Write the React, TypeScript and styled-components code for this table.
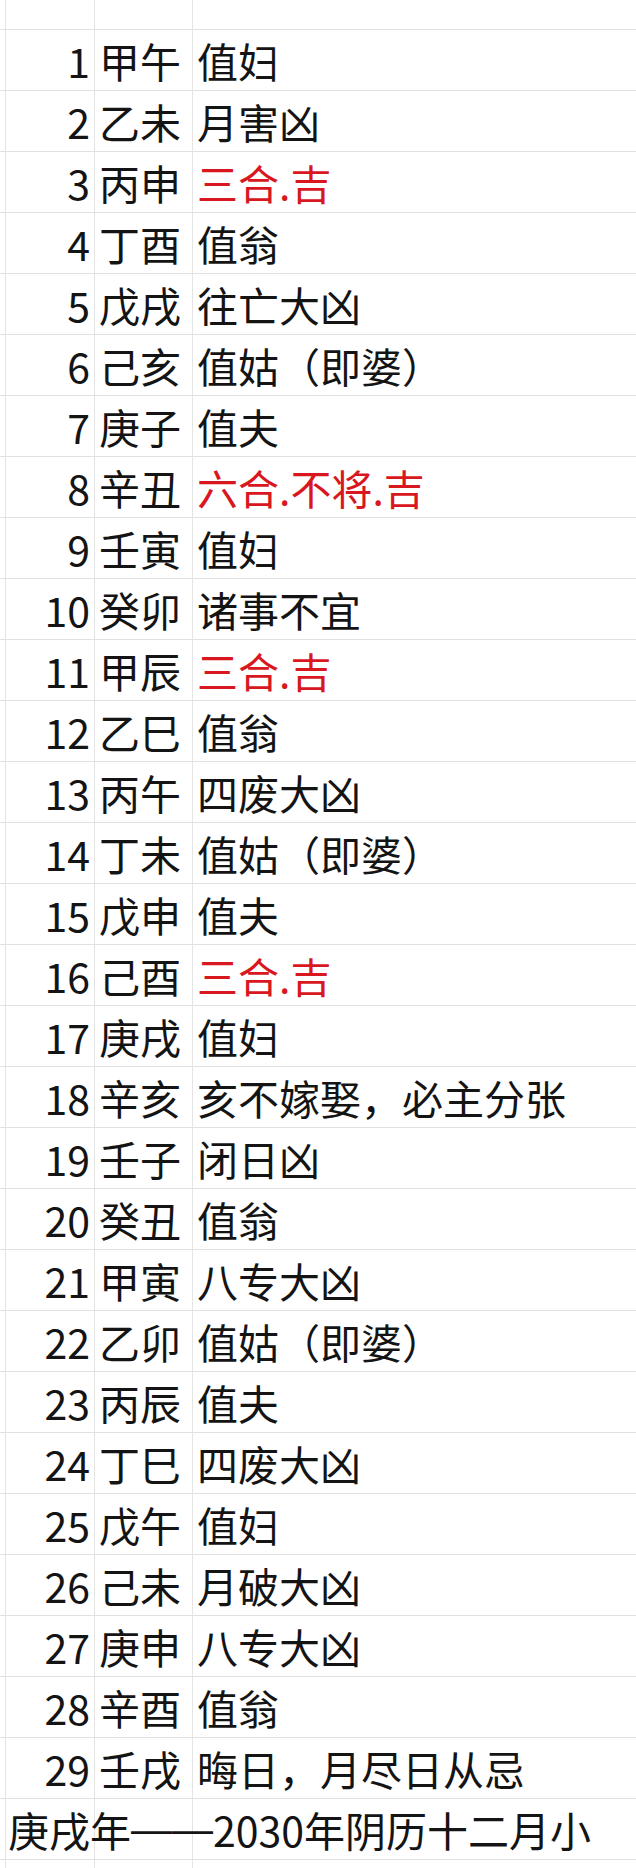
import styled, { createGlobalStyle } from 'styled-components';

const GlobalStyle = createGlobalStyle`
  html, body {
    margin: 0;
    padding: 0;
    background: #ffffff;
    overflow: hidden;
  }
  body {
    font-family: "Noto Sans CJK SC", "Noto Sans", sans-serif;
  }
`;

type Day = {
    day: number
    ganzhi: string
    note: string
    lucky?: boolean
}

const days: Day[] = [
    { day: 1, ganzhi: '甲午', note: '值妇' },
    { day: 2, ganzhi: '乙未', note: '月害凶' },
    { day: 3, ganzhi: '丙申', note: '三合.吉', lucky: true },
    { day: 4, ganzhi: '丁酉', note: '值翁' },
    { day: 5, ganzhi: '戊戌', note: '往亡大凶' },
    { day: 6, ganzhi: '己亥', note: '值姑（即婆）' },
    { day: 7, ganzhi: '庚子', note: '值夫' },
    { day: 8, ganzhi: '辛丑', note: '六合.不将.吉', lucky: true },
    { day: 9, ganzhi: '壬寅', note: '值妇' },
    { day: 10, ganzhi: '癸卯', note: '诸事不宜' },
    { day: 11, ganzhi: '甲辰', note: '三合.吉', lucky: true },
    { day: 12, ganzhi: '乙巳', note: '值翁' },
    { day: 13, ganzhi: '丙午', note: '四废大凶' },
    { day: 14, ganzhi: '丁未', note: '值姑（即婆）' },
    { day: 15, ganzhi: '戊申', note: '值夫' },
    { day: 16, ganzhi: '己酉', note: '三合.吉', lucky: true },
    { day: 17, ganzhi: '庚戌', note: '值妇' },
    { day: 18, ganzhi: '辛亥', note: '亥不嫁娶，必主分张' },
    { day: 19, ganzhi: '壬子', note: '闭日凶' },
    { day: 20, ganzhi: '癸丑', note: '值翁' },
    { day: 21, ganzhi: '甲寅', note: '八专大凶' },
    { day: 22, ganzhi: '乙卯', note: '值姑（即婆）' },
    { day: 23, ganzhi: '丙辰', note: '值夫' },
    { day: 24, ganzhi: '丁巳', note: '四废大凶' },
    { day: 25, ganzhi: '戊午', note: '值妇' },
    { day: 26, ganzhi: '己未', note: '月破大凶' },
    { day: 27, ganzhi: '庚申', note: '八专大凶' },
    { day: 28, ganzhi: '辛酉', note: '值翁' },
    { day: 29, ganzhi: '壬戌', note: '晦日，月尽日从忌' },
];

const Sheet = styled.div`
  width: 636px;
  height: 1868px;
  overflow: hidden;
  display: flex;
  flex-direction: column;
  font-size: 41px;
  color: #141414;
`;

const Row = styled.div<{ $height: number }>`
  display: grid;
  grid-template-columns: 6px 89px 98px 1fr;
  height: ${p => p.$height}px;
  flex-shrink: 0;
  border-bottom: 1px solid #e1e1e1;
`;

const Cell = styled.div<{ $align?: 'left' | 'right'; $lucky?: boolean }>`
  display: flex;
  align-items: center;
  justify-content: ${p => (p.$align === 'right' ? 'flex-end' : 'flex-start')};
  padding: ${p => (p.$align === 'right' ? '0 4px 0 0' : '0 0 0 4px')};
  border-right: 1px solid #e4e4e4;
  white-space: nowrap;
  line-height: 1;
  color: ${p => (p.$lucky ? '#d8171e' : 'inherit')};
  min-width: 0;
`;

const Gutter = styled.div`
  border-right: 1px solid #e4e4e4;
`;

const LastCell = styled(Cell)`
  border-right: none;
`;

const Title = styled(Cell)`
  padding-left: 2px;
  overflow: visible;
  position: relative;
  z-index: 1;
`;

// Arial-metric em dashes are exactly 1em and sit edge to edge like the reference
const Dash = styled.span`
  font-family: "Liberation Sans", sans-serif;
  vertical-align: 4px;
`;

const App: React.FC = () => {
    return (
        <>
            <GlobalStyle />
            <Sheet>
                {/* Top partial row */}
                <Row $height={29}>
                    <Gutter />
                    <Cell />
                    <Cell />
                    <LastCell />
                </Row>

                {days.map(d => (
                    <Row key={d.day} $height={60}>
                        <Gutter />
                        <Cell $align="right">{d.day}</Cell>
                        <Cell>{d.ganzhi}</Cell>
                        <LastCell $lucky={d.lucky}>{d.note}</LastCell>
                    </Row>
                ))}

                {/* Footer title overflows across the columns */}
                <Row $height={60}>
                    <Gutter />
                    <Title>庚戌年<Dash>——</Dash>2030年阴历十二月小</Title>
                    <Cell />
                    <LastCell />
                </Row>

                <Row $height={60}>
                    <Gutter />
                    <Cell />
                    <Cell />
                    <LastCell />
                </Row>
            </Sheet>
        </>
    );
}

export default App;
